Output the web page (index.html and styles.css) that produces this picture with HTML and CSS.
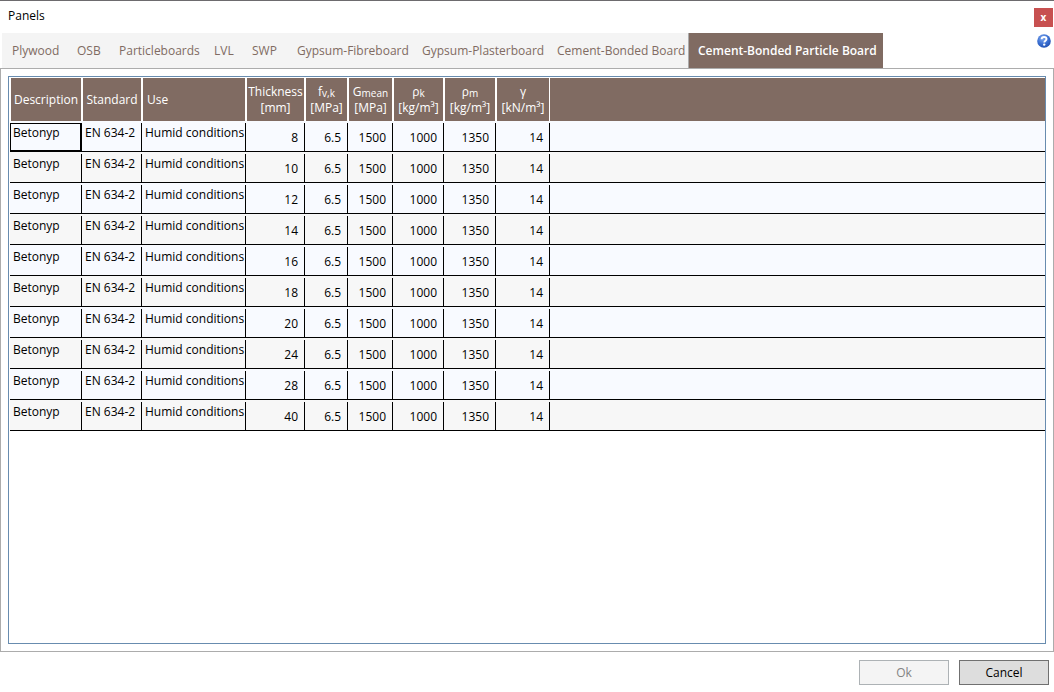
FILE: index.html
```html
<!DOCTYPE html>
<html lang="en">
<head>
	<meta charset="utf-8">
	<title>Panels</title>
	<link rel="stylesheet" href="styles.css">
</head>
<body>
<div class="dialog">
	<div class="top">
		<div class="main">
			<h1>Panels</h1>
			<nav class="tabs">
				<a href="#plywood">Plywood</a>
				<a href="#osb">OSB</a>
				<a href="#particleboards">Particleboards</a>
				<a href="#lvl">LVL</a>
				<a href="#swp">SWP</a>
				<a href="#fibreboard">Gypsum-Fibreboard</a>
				<a href="#plasterboard">Gypsum-Plasterboard</a>
				<a href="#cement">Cement-Bonded Board</a>
				<a href="#particle" class="active">Cement-Bonded Particle Board</a>
			</nav>
		</div>
		<div class="tools">
			<button type="button" class="close" aria-label="Close">x</button>
			<button type="button" class="help" aria-label="Help">
				<svg width="14" height="14" viewBox="0 0 14 14">
					<defs>
						<radialGradient id="ball" cx="0.4" cy="0.3" r="0.7">
							<stop offset="0" stop-color="#7fa8ee"/>
							<stop offset="0.6" stop-color="#3a6fd2"/>
							<stop offset="1" stop-color="#2453b4"/>
						</radialGradient>
					</defs>
					<circle cx="7" cy="7" r="6.8" fill="url(#ball)"/>
					<path d="M4.6 5.200C4.700 3.600 5.800 3 7.100 3c1.400 0 2.400.8 2.400 2 0 1.600-2.200 1.700-2.200 3.400" fill="none" stroke="#fff" stroke-width="1.900"/>
					<circle cx="7.200" cy="10.600" r="1.200" fill="#fff"/>
				</svg>
			</button>
		</div>
	</div>

	<div class="content" id="particle">
		<div class="datagrid">
			<table>
				<colgroup>
					<col class="c-desc"><col class="c-std"><col class="c-use"><col class="c-thick"><col class="c-fvk">
					<col class="c-g"><col class="c-rk"><col class="c-rm"><col class="c-gamma"><col>
				</colgroup>
				<thead>
					<tr>
						<th>Description</th>
						<th>Standard</th>
						<th class="left">Use</th>
						<th>Thickness<br>[mm]</th>
						<th>f<sub>v,k</sub><br>[MPa]</th>
						<th>G<sub>mean</sub><br>[MPa]</th>
						<th>ρ<sub>k</sub><br>[kg/m³]</th>
						<th>ρ<sub>m</sub><br>[kg/m³]</th>
						<th>γ<br>[kN/m³]</th>
						<th class="fill"></th>
					</tr>
				</thead>
				<tbody>
					<tr><td class="current">Betonyp</td><td>EN 634-2</td><td>Humid conditions</td><td class="num">8</td><td class="num">6.5</td><td class="num">1500</td><td class="num">1000</td><td class="num">1350</td><td class="num">14</td><td class="fill"></td></tr>
					<tr><td>Betonyp</td><td>EN 634-2</td><td>Humid conditions</td><td class="num">10</td><td class="num">6.5</td><td class="num">1500</td><td class="num">1000</td><td class="num">1350</td><td class="num">14</td><td class="fill"></td></tr>
					<tr><td>Betonyp</td><td>EN 634-2</td><td>Humid conditions</td><td class="num">12</td><td class="num">6.5</td><td class="num">1500</td><td class="num">1000</td><td class="num">1350</td><td class="num">14</td><td class="fill"></td></tr>
					<tr><td>Betonyp</td><td>EN 634-2</td><td>Humid conditions</td><td class="num">14</td><td class="num">6.5</td><td class="num">1500</td><td class="num">1000</td><td class="num">1350</td><td class="num">14</td><td class="fill"></td></tr>
					<tr><td>Betonyp</td><td>EN 634-2</td><td>Humid conditions</td><td class="num">16</td><td class="num">6.5</td><td class="num">1500</td><td class="num">1000</td><td class="num">1350</td><td class="num">14</td><td class="fill"></td></tr>
					<tr><td>Betonyp</td><td>EN 634-2</td><td>Humid conditions</td><td class="num">18</td><td class="num">6.5</td><td class="num">1500</td><td class="num">1000</td><td class="num">1350</td><td class="num">14</td><td class="fill"></td></tr>
					<tr><td>Betonyp</td><td>EN 634-2</td><td>Humid conditions</td><td class="num">20</td><td class="num">6.5</td><td class="num">1500</td><td class="num">1000</td><td class="num">1350</td><td class="num">14</td><td class="fill"></td></tr>
					<tr><td>Betonyp</td><td>EN 634-2</td><td>Humid conditions</td><td class="num">24</td><td class="num">6.5</td><td class="num">1500</td><td class="num">1000</td><td class="num">1350</td><td class="num">14</td><td class="fill"></td></tr>
					<tr><td>Betonyp</td><td>EN 634-2</td><td>Humid conditions</td><td class="num">28</td><td class="num">6.5</td><td class="num">1500</td><td class="num">1000</td><td class="num">1350</td><td class="num">14</td><td class="fill"></td></tr>
					<tr><td>Betonyp</td><td>EN 634-2</td><td>Humid conditions</td><td class="num">40</td><td class="num">6.5</td><td class="num">1500</td><td class="num">1000</td><td class="num">1350</td><td class="num">14</td><td class="fill"></td></tr>
				</tbody>
			</table>
		</div>
	</div>

	<div class="buttons">
		<button type="button" class="btn" disabled>Ok</button>
		<button type="button" class="btn">Cancel</button>
	</div>
</div>
</body>
</html>
```
FILE: styles.css
```css
* { box-sizing: border-box; }
body {
	margin: 0;
	background: #fff;
	color: #000;
	font: 12px/16px "Segoe UI", "Open Sans", sans-serif;
}
button { font: inherit; padding: 0; }
.dialog {
	display: flex;
	flex-direction: column;
	min-height: 100vh;
	border-top: 1px solid #6d6b6e;
}

/* title, tabs and the two small buttons */
.top {
	display: flex;
	justify-content: space-between;
}
h1 {
	margin: 0;
	padding: 7px 8px 9px;
	font-size: 12px;
	font-weight: normal;
}
.tabs {
	display: grid;
	grid-template-columns: 65px 42px 95px 38px 45px 125px 135px 141px 195px;
	margin-left: 2px;
	background: #f4f4f4;
	white-space: nowrap;
}
.tabs a {
	height: 35px;
	line-height: 36px;
	padding-left: 10px;
	color: #806b62;
	text-decoration: none;
}
.tabs a.active {
	padding-left: 9px;
	border-left: 1px solid #acacac;
	background: #806b62;
	color: #fff;
	font-weight: 600;
}
.tools {
	display: flex;
	flex-direction: column;
	align-items: center;
	gap: 7px;
	padding: 7px 1px 0 0;
}
.close {
	width: 19px;
	height: 19px;
	padding-bottom: 2px;
	border: 0;
	background: #c75050;
	color: #fff;
	font-size: 10px;
	font-weight: bold;
}
.help {
	height: 14px;
	border: 0;
	background: none;
}
.help svg { display: block; }

/* table */
.content {
	flex: 1;
	display: flex;
	padding: 7px;
	border: 1px solid #acacac;
}
.datagrid {
	flex: 1;
	padding: 1px 0 0 1px;
	border: 1px solid #688caf;
}
table {
	width: 100%;
	table-layout: fixed;
	border-collapse: separate;
	border-spacing: 0;
	white-space: nowrap;
}
.c-desc { width: 72px; }
.c-std { width: 60px; }
.c-use { width: 104px; }
.c-thick { width: 59px; }
.c-fvk { width: 43px; }
.c-g { width: 45px; }
.c-rk { width: 51px; }
.c-rm { width: 52px; }
.c-gamma { width: 54px; }
th {
	height: 43px;
	padding: 0;
	border: solid #fff;
	border-width: 0 1px;
	background: #806b62;
	color: #fff;
	font-weight: normal;
}
th.left {
	padding-left: 4px;
	text-align: left;
}
th.fill { border: 0; }
sub {
	font-size: 10px;
	line-height: 1;
	vertical-align: -1px;
}
td {
	height: 31px;
	padding: 4px 3px 0;
	border-bottom: 1px solid #000;
	/* column line stops short of the row above */
	background: linear-gradient(#000, #000) right bottom / 1px calc(100% - 2px) no-repeat;
	vertical-align: top;
}
tbody tr { background: #f8faff; }
tbody tr:nth-child(even) { background: #f7f7f7; }
td.num {
	padding: 9px 7px 0 0;
	text-align: right;
}
td.fill { background: none; }
td.current {
	position: relative;
}
td.current:after {
	content: "";
	position: absolute;
	top: 2px; right: 0;
	bottom: -1px; left: 0;
	border: solid #000;
	border-width: 1px 2px 2px 1px;
}

.buttons {
	display: flex;
	justify-content: flex-end;
	gap: 10px;
	padding: 8px 5px 7px;
}
.btn {
	width: 90px;
	height: 25px;
	border: 1px solid #707070;
	background: #ddd;
	color: #000;
}
.btn:disabled {
	border-color: #adb2b5;
	background: #f4f4f4;
	color: #838383;
}
```
